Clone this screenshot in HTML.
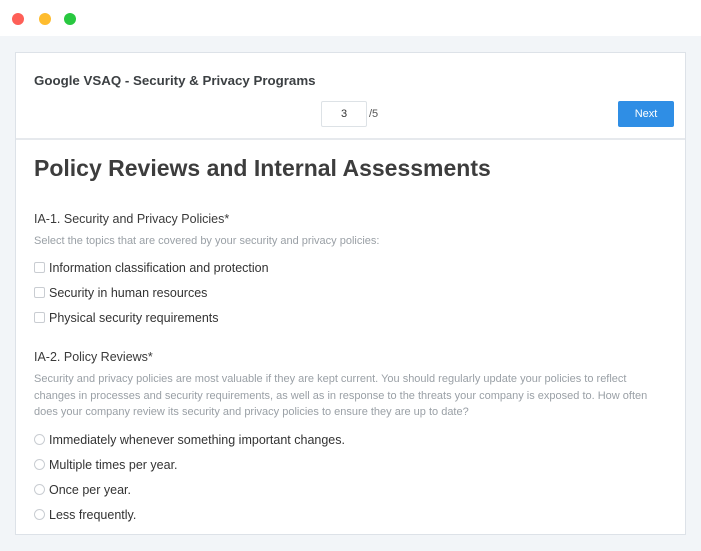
<!DOCTYPE html>
<html><head><style>
*{margin:0;padding:0;box-sizing:border-box}
body{width:701px;height:551px;background:#f2f5f8;font-family:"Liberation Sans",sans-serif;position:relative;overflow:hidden;color:#444}
.top{position:absolute;left:0;top:0;width:701px;height:36px;background:#fff}
.dot{position:absolute;top:13px;width:12px;height:12px;border-radius:50%}
.card{position:absolute;left:15px;top:52px;width:671px;height:483px;background:#fff;border:1px solid #dde2e8}
.hdr{position:absolute;left:0;top:0;width:669px;height:87px;border-bottom:2px solid #e6e9ed}
.t{position:absolute;left:18px;top:20px;font-size:13.3px;font-weight:bold;color:#3c4043}
.pg{position:absolute;left:305px;top:48px;width:46px;height:26px;border:1px solid #dde2e6;border-radius:2px;font-size:11px;text-align:center;line-height:24px;color:#333}
.of{position:absolute;left:353px;top:55px;font-size:11px;color:#555}
.next{position:absolute;left:602px;top:48px;width:56px;height:26px;background:#2f8ee5;border-radius:2px;color:#fff;font-size:11px;text-align:center;line-height:26px}
.abs{position:absolute;white-space:nowrap}
h1{position:absolute;left:18px;top:102px;font-size:23px;font-weight:bold;color:#3d3d3d}
.q{font-size:12.5px;color:#3a3a3a}
.d{font-size:11px;color:#9aa0a6;line-height:16.5px;white-space:normal;width:625px}
.o{font-size:12.5px;color:#333}
.cb{display:inline-block;width:11px;height:11px;border:1px solid #c9cdd2;border-radius:2px;vertical-align:-1px;margin-right:4px}
.rd{display:inline-block;width:11px;height:11px;border:1px solid #c9cdd2;border-radius:50%;vertical-align:-1px;margin-right:4px}
</style></head><body>
<div class="top"><div class="dot" style="left:12px;background:#fe5f57"></div><div class="dot" style="left:39px;background:#febc2e"></div><div class="dot" style="left:64px;background:#28c840"></div></div>
<div class="card">
<div class="hdr"><div class="t">Google VSAQ - Security &amp; Privacy Programs</div><div class="pg">3</div><div class="of">/5</div><div class="next">Next</div></div>
<h1>Policy Reviews and Internal Assessments</h1>
<div class="abs q" style="left:18px;top:159px">IA-1. Security and Privacy Policies*</div>
<div class="abs d" style="left:18px;top:180px">Select the topics that are covered by your security and privacy policies:</div>
<div class="abs o" style="left:18px;top:208px"><span class="cb"></span>Information classification and protection</div>
<div class="abs o" style="left:18px;top:233px"><span class="cb"></span>Security in human resources</div>
<div class="abs o" style="left:18px;top:258px"><span class="cb"></span>Physical security requirements</div>
<div class="abs q" style="left:18px;top:297px">IA-2. Policy Reviews*</div>
<div class="abs d" style="left:18px;top:318px">Security and privacy policies are most valuable if they are kept current. You should regularly update your policies to reflect<br>changes in processes and security requirements, as well as in response to the threats your company is exposed to. How often<br>does your company review its security and privacy policies to ensure they are up to date?</div>
<div class="abs o" style="left:18px;top:380px"><span class="rd"></span>Immediately whenever something important changes.</div>
<div class="abs o" style="left:18px;top:405px"><span class="rd"></span>Multiple times per year.</div>
<div class="abs o" style="left:18px;top:430px"><span class="rd"></span>Once per year.</div>
<div class="abs o" style="left:18px;top:455px"><span class="rd"></span>Less frequently.</div>
</div>
</body></html>
